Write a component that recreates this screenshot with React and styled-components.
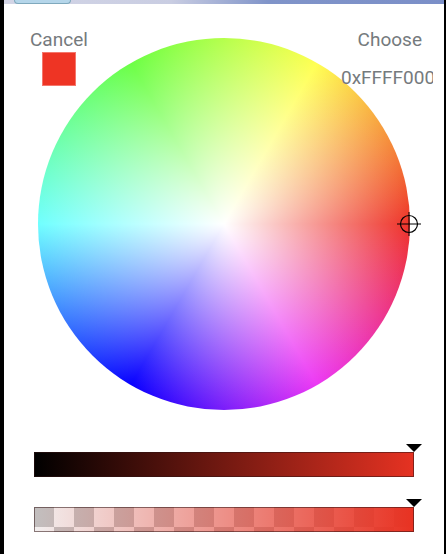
import styled, { createGlobalStyle } from "styled-components";

const GlobalStyle = createGlobalStyle`
	html, body {
		margin: 0;
		padding: 0;
		background: #000;
	}
	body {
		width: 446px;
		height: 554px;
		overflow: hidden;
		font-family: "Roboto", "Liberation Sans", sans-serif;
	}
`;

const Screen = styled.div`
	width: 446px;
	height: 554px;
	display: flex;
	flex-direction: column;
	overflow: hidden;
	background: #000;
`;

const StatusStrip = styled.div`
	height: 4px;
	margin-left: 4px;
	margin-right: 2px;
	flex-shrink: 0;
	display: flex;
	background: linear-gradient(90deg, #d3d5e6 0%, #c9cde2 38%, #8094c9 60%, #7b8fc8 100%);
`;

const StatusTab = styled.div`
	width: 57px;
	height: 4px;
	margin-left: 10px;
	background: #b5d6ea;
	border: 1px solid #7fa9bd;
	border-top: none;
	box-sizing: border-box;
	border-radius: 0 0 5px 5px;
`;

const Panel = styled.div`
	flex: 1;
	margin-left: 4px;
	margin-right: 2px;
	background: #fff;
	display: flex;
	flex-direction: column;
`;

const Stage = styled.div`
	display: grid;
	height: 406px;
	flex-shrink: 0;
`;

const WheelSlot = styled.div`
	grid-area: 1 / 1;
	padding: 34px 0 0 34px;
`;

const Wheel = styled.div`
	position: relative;
	width: 372px;
	height: 372px;
	border-radius: 50%;
	background:
		radial-gradient(circle closest-side, #fff 0%, rgba(255, 255, 255, 0) 100%),
		conic-gradient(from 90deg, #ee3228, #ec38f4 60deg, #0800ff 120deg, #70ffff 180deg, #6cff45 240deg, #ffff52 300deg, #ee3228);
`;

const Marker = styled.svg`
	position: absolute;
	left: 358px;
	top: 173px;
	width: 26px;
	height: 26px;
`;

const Controls = styled.div`
	grid-area: 1 / 1;
	z-index: 1;
	width: 429px;
	overflow: hidden;
	display: flex;
	flex-direction: column;
`;

const ButtonRow = styled.div`
	display: flex;
	justify-content: space-between;
	padding: 25px 11px 0 26px;
`;

const TextButton = styled.span`
	font-size: 19px;
	line-height: 22px;
	color: #757a7d;
`;

const ValueRow = styled.div`
	display: flex;
	justify-content: space-between;
	align-items: flex-start;
	padding: 1px 0 0 38px;
`;

const Swatch = styled.div`
	width: 32px;
	height: 32px;
	background: #ee3424;
	border: 1px solid #f4776c;
`;

const HexText = styled.span`
	font-size: 19px;
	line-height: 24px;
	margin-top: 3px;
	padding-top: 11px;
	color: #757a7d;
	white-space: nowrap;
	width: 92px;
	overflow: hidden;
`;

const Sliders = styled.div`
	display: flex;
	flex-direction: column;
	gap: 30px;
	padding: 42px 0 0 30px;
`;

const Track = styled.div`
	position: relative;
	width: 380px;
	height: 25px;
	box-sizing: border-box;
	border: 1px solid rgba(50, 20, 20, 0.55);
	background: ${(p) => p.$fill};
	background-origin: border-box;
`;

const Thumb = styled.div`
	position: absolute;
	right: -9px;
	top: -9px;
	width: 0;
	height: 0;
	border-left: 8px solid transparent;
	border-right: 8px solid transparent;
	border-top: 8px solid #000;
`;

const CHECKER = "conic-gradient(#f2efef 25%, #c2bfbf 0 50%, #f2efef 0 75%, #c2bfbf 0) 0 0 / 40px 40px";
const VALUE_FILL = "linear-gradient(90deg, #000, #e63222)";
const ALPHA_FILL = `linear-gradient(90deg, rgba(232, 50, 34, 0), #e83222), ${CHECKER}`;

export default function App() {
	return (
		<Screen>
			<GlobalStyle />
			<StatusStrip>
				<StatusTab />
			</StatusStrip>
			<Panel>
				<Stage>
					<WheelSlot>
						<Wheel>
							<Marker viewBox="0 0 26 26">
								<circle cx="13" cy="13" r="8.5" fill="none" stroke="#000" strokeWidth="1.2" />
								<path d="M13 1V25M1 13H25" stroke="#000" strokeWidth="1" fill="none" />
							</Marker>
						</Wheel>
					</WheelSlot>
					<Controls>
						<ButtonRow>
							<TextButton>Cancel</TextButton>
							<TextButton>Choose</TextButton>
						</ButtonRow>
						<ValueRow>
							<Swatch />
							<HexText>0xFFFF0000</HexText>
						</ValueRow>
					</Controls>
				</Stage>
				<Sliders>
					<Track $fill={VALUE_FILL}>
						<Thumb />
					</Track>
					<Track $fill={ALPHA_FILL}>
						<Thumb />
					</Track>
				</Sliders>
			</Panel>
		</Screen>
	);
}
